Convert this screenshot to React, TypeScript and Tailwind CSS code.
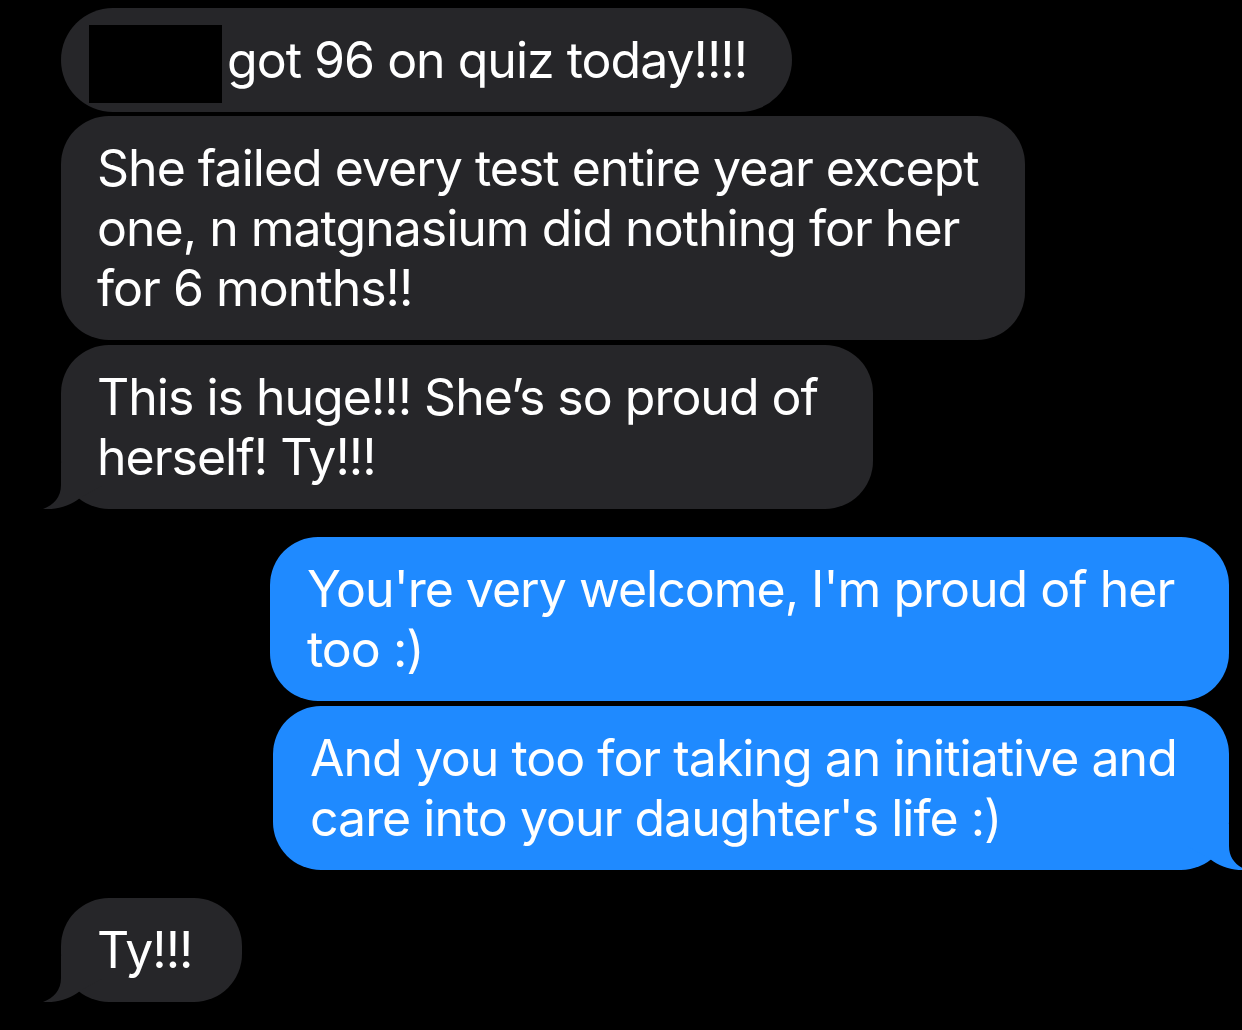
import type { ReactNode } from 'react';

function Tail({ side }: { side: 'left' | 'right' }) {
  const fill = side === 'left' ? '#262629' : '#1f8aff';
  return (
    <svg
      width="60"
      height="46"
      viewBox="0 0 60 46"
      className={
        side === 'left'
          ? 'absolute left-[-18px] bottom-0'
          : 'absolute right-[-18px] bottom-0 -scale-x-100'
      }
    >
      <path
        d="M18 0 L18 22 C18 34 11 42 0 46 C14 47 27 43 37 35 L60 22 L60 0 Z"
        fill={fill}
      />
    </svg>
  );
}

function Bubble({
  children,
  mine,
  tail,
  className,
}: {
  children: ReactNode;
  mine?: boolean;
  tail?: boolean;
  className: string;
}) {
  return (
    <div
      className={`relative shrink-0 rounded-[48px] py-[22px] text-white text-[50px] leading-[60px] tracking-[-1px] whitespace-nowrap ${
        mine ? 'bg-[#1f8aff] self-end' : 'bg-[#262629] self-start'
      } ${className}`}
    >
      {tail && <Tail side={mine ? 'right' : 'left'} />}
      <div className="relative flex items-center">{children}</div>
    </div>
  );
}

export default function App() {
  return (
    <div
      className="w-[1242px] h-[1030px] bg-black overflow-hidden flex flex-col pt-[8px] pl-[61px] pr-[13px]"
      style={{ fontFamily: 'Inter, "Noto Sans", sans-serif' }}
    >
      <Bubble className="w-[731px] rounded-[52px] pl-[28px] pr-[30px]">
        <span className="block w-[133px] h-[78px] -my-[9px] translate-y-[4px] bg-black mr-[5px]" />
        <span>got 96 on quiz today!!!!</span>
      </Bubble>
      <Bubble className="w-[964px] mt-[4px] pl-[36px] pr-[30px]">
        <p>
          She failed every test entire year except
          <br />
          one, n matgnasium did nothing for her
          <br />
          for 6 months!!
        </p>
      </Bubble>
      <Bubble tail className="w-[812px] mt-[5px] pl-[36px] pr-[30px]">
        <p>
          This is huge!!! She’s so proud of
          <br />
          herself! Ty!!!
        </p>
      </Bubble>
      <Bubble mine className="w-[959px] mt-[28px] pl-[37px] pr-[30px]">
        <p>
          You're very welcome, I'm proud of her
          <br />
          too :)
        </p>
      </Bubble>
      <Bubble mine tail className="w-[956px] mt-[5px] pl-[37px] pr-[30px]">
        <p>
          And you too for taking an initiative and
          <br />
          care into your daughter's life :)
        </p>
      </Bubble>
      <Bubble tail className="w-[181px] mt-[28px] pl-[36px] pr-[30px]">
        <p>Ty!!!</p>
      </Bubble>
    </div>
  );
}
